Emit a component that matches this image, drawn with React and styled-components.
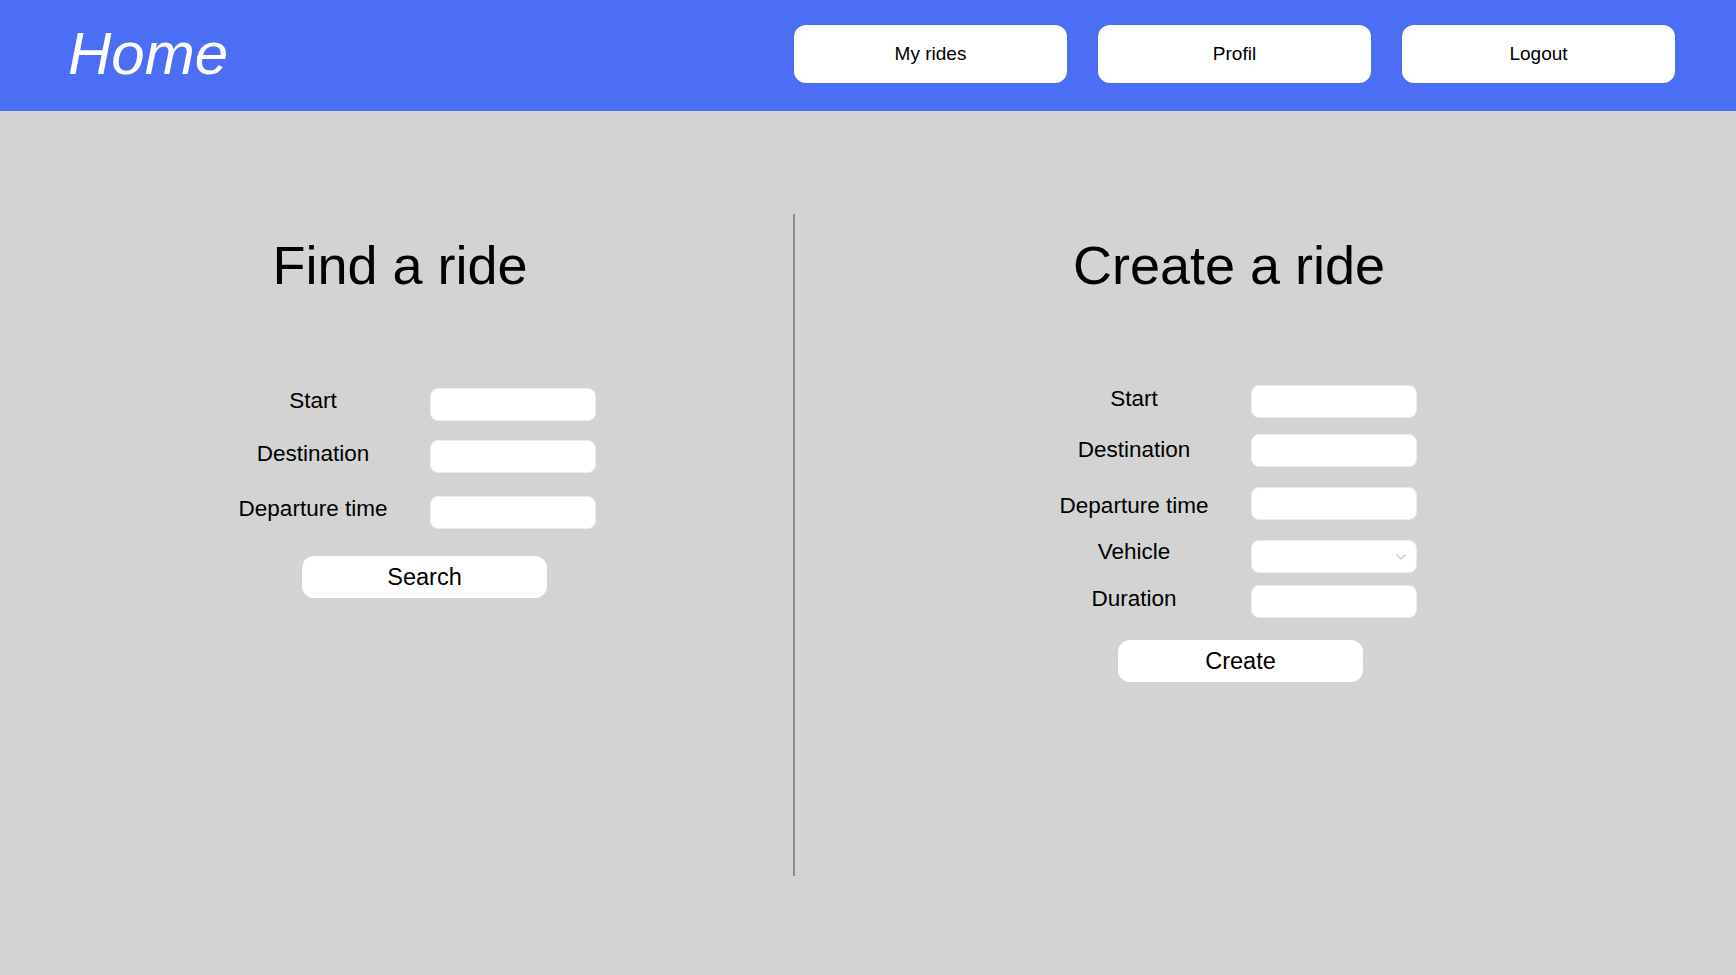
import React, { useState } from "react";
import styled, { createGlobalStyle } from "styled-components";

const GlobalStyle = createGlobalStyle`
  body {
    margin: 0;
    background: #d3d3d3;
    font-family: "Liberation Sans", Arial, sans-serif;
  }
`;

const findFields = [
  { label: "Start", top: 97 },
  { label: "Destination", top: 19, nudge: 1 },
  { label: "Departure time", top: 23 },
];

const createFields = [
  { label: "Start", top: 94, nudge: 1 },
  { label: "Destination", top: 16, nudge: 3 },
  { label: "Departure time", top: 20, nudge: 6 },
  { label: "Vehicle", top: 20, nudge: -1, select: true },
  { label: "Duration", top: 12, nudge: 1 },
];

const App = () => {
  const [vehicle, setVehicle] = useState("");

  return (
    <Page>
      <GlobalStyle />
      <Header>
        <Brand>Home</Brand>
        <Nav>
          <NavButton>My rides</NavButton>
          <NavButton>Profil</NavButton>
          <NavButton>Logout</NavButton>
        </Nav>
      </Header>

      <Main>
        <Column $width={794} $pad={6}>
          <Title>Find a ride</Title>
          <Form $offset={192}>
            {findFields.map((f) => (
              <Row key={f.label} $top={f.top}>
                <Label $nudge={f.nudge}>{f.label}</Label>
                <Input type="text" />
              </Row>
            ))}
            <Submit $top={27} $offset={104}>
              Search
            </Submit>
          </Form>
        </Column>

        <Divider />

        <Column $width={868}>
          <Title>Create a ride</Title>
          <Form $offset={224}>
            {createFields.map((f) => (
              <Row key={f.label} $top={f.top}>
                <Label $nudge={f.nudge}>{f.label}</Label>
                {f.select ? (
                  <SelectWrap>
                    <Select
                      value={vehicle}
                      onChange={(e) => setVehicle(e.target.value)}
                    >
                      <option value=""></option>
                    </Select>
                    <Chevron viewBox="0 0 10 6">
                      <path d="M0.5 0.5 L5 5 L9.5 0.5" />
                    </Chevron>
                  </SelectWrap>
                ) : (
                  <Input type="text" />
                )}
              </Row>
            ))}
            <Submit $top={22} $offset={99}>
              Create
            </Submit>
          </Form>
        </Column>
      </Main>
    </Page>
  );
};

export default App;

//LAYOUT
const Page = styled.div`
  min-height: 100vh;
  background: #d3d3d3;
`;

const Header = styled.header`
  display: flex;
  align-items: center;
  height: 111px;
  padding: 0 61px 0 68px;
  background: #4c6ef5;
  box-sizing: border-box;
`;

const Brand = styled.h1`
  margin: 0 0 3px 0;
  font-size: 60px;
  line-height: 1;
  font-style: italic;
  font-weight: 400;
  color: #fff;
`;

const Nav = styled.nav`
  display: flex;
  gap: 31px;
  margin: 0 0 3px auto;
`;

const NavButton = styled.button`
  width: 273px;
  height: 58px;
  border: none;
  border-radius: 12px;
  background: #fff;
  color: #000;
  font-family: "Liberation Sans", Arial, sans-serif;
  font-size: 19px;
  cursor: pointer;
`;

const Main = styled.main`
  display: flex;
  padding-top: 103px;
`;

const Column = styled.section`
  flex: none;
  box-sizing: border-box;
  width: ${(p) => p.$width}px;
  padding-left: ${(p) => p.$pad || 0}px;
  display: flex;
  flex-direction: column;
`;

const Divider = styled.div`
  flex: none;
  width: 2px;
  height: 662px;
  margin-left: -1px;
  background: #8c8c8c;
`;

const Title = styled.h2`
  margin: 24px 0 0 0;
  font-size: 54px;
  line-height: 1;
  font-weight: 400;
  text-align: center;
  color: #000;
`;

//FORM
const Form = styled.form`
  display: flex;
  flex-direction: column;
  align-items: flex-start;
  margin-top: -1px;
  margin-left: ${(p) => p.$offset}px;
`;

const Row = styled.div`
  display: grid;
  grid-template-columns: 230px 166px;
  column-gap: 2px;
  align-items: start;
  margin-top: ${(p) => p.$top}px;
`;

const Label = styled.label`
  margin-top: ${(p) => p.$nudge || 0}px;
  font-size: 22.5px;
  text-align: center;
  color: #000;
`;

const Input = styled.input`
  width: 166px;
  height: 33px;
  box-sizing: border-box;
  border: 1px solid #ececec;
  border-radius: 8px;
  background: #fff;
  outline: none;
`;

const SelectWrap = styled.div`
  position: relative;
  width: 166px;
  height: 33px;
`;

const Select = styled.select`
  appearance: none;
  width: 100%;
  height: 100%;
  box-sizing: border-box;
  border: 1px solid #ececec;
  border-radius: 8px;
  background: #fff;
  outline: none;
`;

const Chevron = styled.svg`
  position: absolute;
  right: 11px;
  top: 14px;
  width: 10px;
  height: 6px;
  fill: none;
  stroke: #c3c6d4;
  stroke-width: 1.2;
  pointer-events: none;
`;

const Submit = styled.button`
  width: 245px;
  height: 42px;
  margin-top: ${(p) => p.$top}px;
  margin-left: ${(p) => p.$offset}px;
  border: none;
  border-radius: 12px;
  background: #fff;
  color: #000;
  font-family: "Liberation Sans", Arial, sans-serif;
  font-size: 23.5px;
  cursor: pointer;
`;
